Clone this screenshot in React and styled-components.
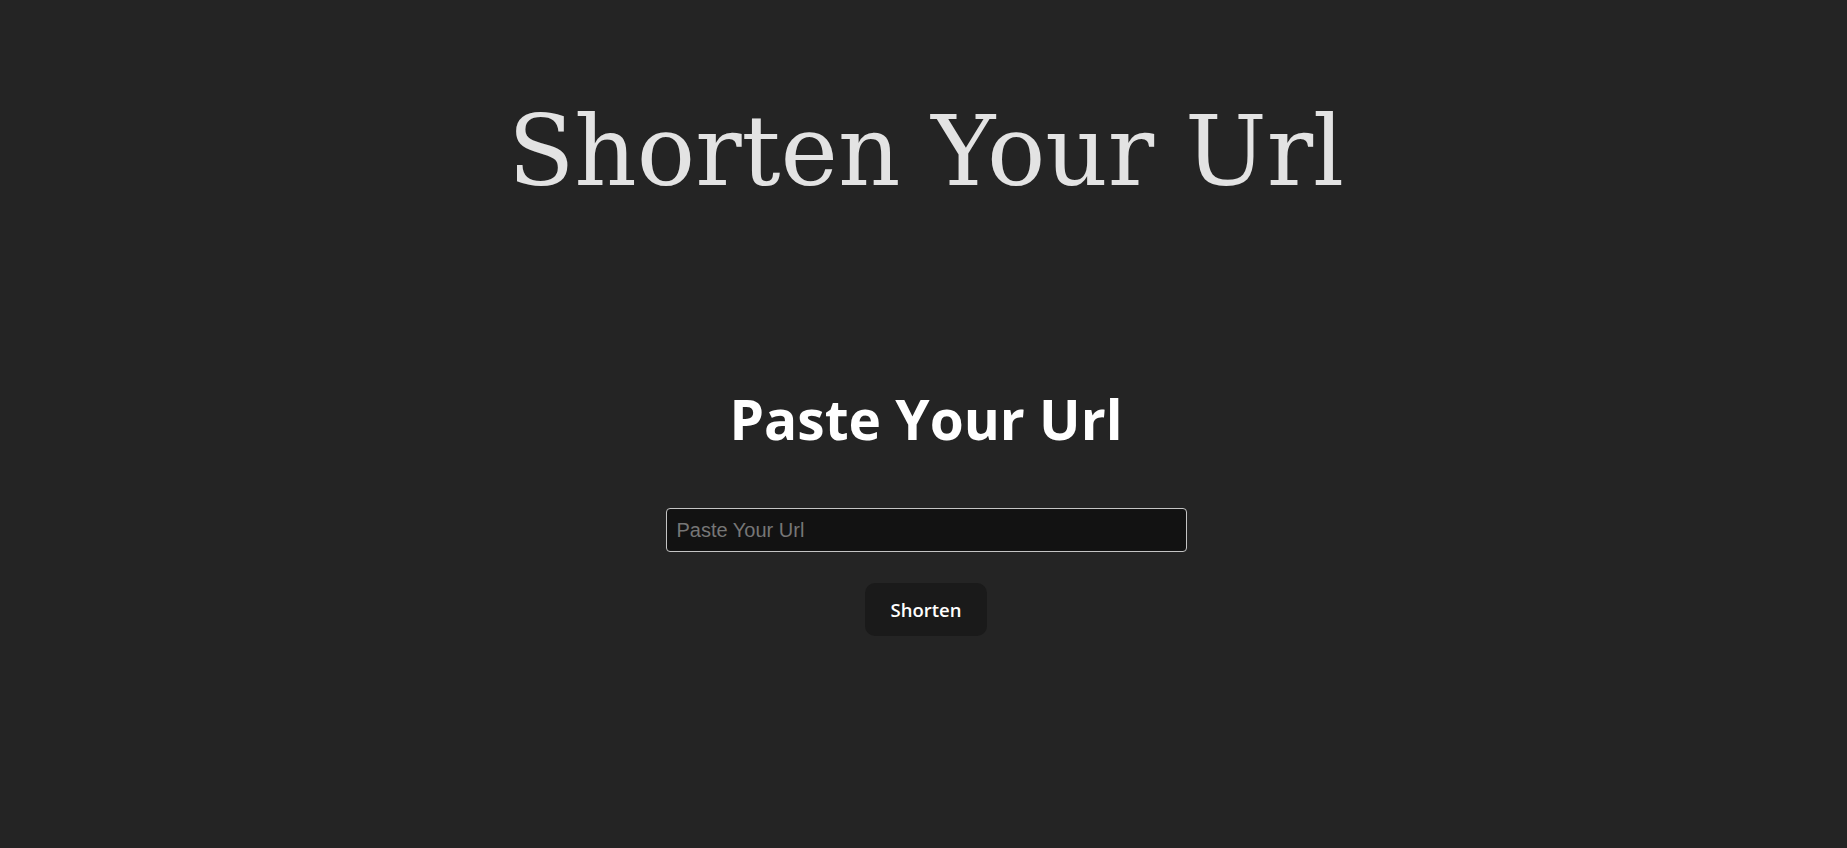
import React from "react";
import styled, { createGlobalStyle } from "styled-components";

const GlobalStyle = createGlobalStyle`
  html, body {
    margin: 0;
    padding: 0;
    background: #242424;
  }
  body {
    min-height: 100vh;
    font-family: "Open Sans", "Noto Sans", sans-serif;
    color: rgba(255, 255, 255, 0.87);
  }
`;

const Page = styled.div`
  display: flex;
  flex-direction: column;
  align-items: center;
  min-height: 100vh;
  padding-top: 97px;
  padding-left: 5px;
  box-sizing: border-box;
`;

const Title = styled.h1`
  margin: 0;
  font-family: "DejaVu Serif", "Liberation Serif", serif;
  font-weight: 400;
  font-size: 97px;
  line-height: 110px;
  color: #e3e3e3;
`;

const Form = styled.form`
  display: flex;
  flex-direction: column;
  align-items: center;
  margin-top: 180px;
`;

const Heading = styled.h2`
  margin: 0;
  font-family: "Open Sans", "Noto Sans", sans-serif;
  font-weight: 700;
  font-size: 55px;
  line-height: 64px;
  color: #ffffff;
`;

const UrlInput = styled.input`
  margin-top: 57px;
  width: 521px;
  height: 44px;
  box-sizing: border-box;
  padding: 0 10px;
  border: 1px solid #c4c4c4;
  border-radius: 4px;
  background: #121212;
  color: #e6e6e6;
  font-family: "Liberation Sans", Arial, sans-serif;
  font-size: 20px;
  outline: none;
  &::placeholder {
    color: #767676;
  }
`;

const Button = styled.button`
  margin-top: 31px;
  width: 122px;
  height: 53px;
  border: 1px solid transparent;
  border-radius: 10px;
  background: #1a1a1a;
  color: #ffffff;
  font-family: "Open Sans", "Noto Sans", sans-serif;
  font-weight: 600;
  font-size: 18.5px;
  cursor: pointer;
`;

export default function App() {
  return (
    <>
      <GlobalStyle />
      <Page>
        <Title>Shorten Your Url</Title>
        <Form onSubmit={(e) => e.preventDefault()}>
          <Heading>Paste Your Url</Heading>
          <UrlInput type="text" placeholder="Paste Your Url" />
          <Button type="submit">Shorten</Button>
        </Form>
      </Page>
    </>
  );
}
